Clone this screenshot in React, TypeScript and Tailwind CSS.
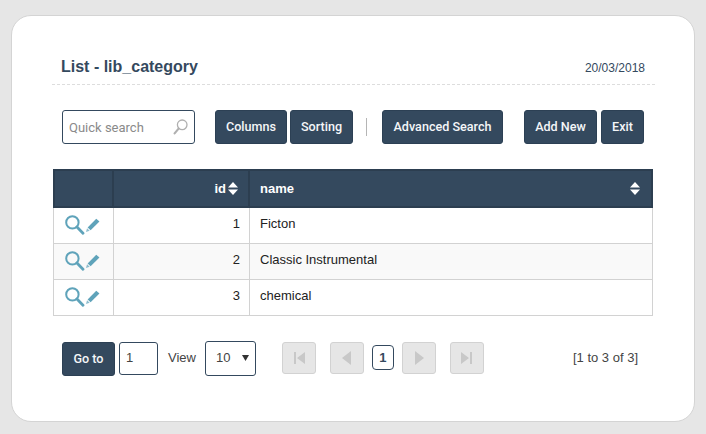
const rows = [
  { id: 1, name: "Ficton" },
  { id: 2, name: "Classic Instrumental" },
  { id: 3, name: "chemical" },
];

const roboto = "font-['Roboto',sans-serif]";
const arial = "font-['Liberation_Sans',sans-serif]";
const btn =
  "flex h-[34px] items-center justify-center rounded-[3px] border border-[#2c4054] bg-[#34495e] pt-px text-[12.6px] font-medium text-[#f4f6f8] font-['Roboto',sans-serif]";

function SortIcon() {
  return (
    <svg width="10" height="13" viewBox="0 0 10 13" fill="white">
      <path d="M5 0 L10 5.5 H0 Z" />
      <path d="M0 7.5 H10 L5 13 Z" />
    </svg>
  );
}

function QuickSearchIcon() {
  return (
    <svg width="15" height="16" viewBox="0 0 15 16" fill="none" stroke="#b0b0b0">
      <circle cx="9.2" cy="5.8" r="4.8" strokeWidth="1.3" />
      <path d="M5.6 9.6 L1.6 14.4" strokeWidth="2.2" strokeLinecap="round" />
    </svg>
  );
}

function ViewIcon() {
  return (
    <svg width="20" height="20" viewBox="0 0 20 20" fill="none" stroke="#5fa3ba">
      <circle cx="7.4" cy="7.4" r="6.2" strokeWidth="2" />
      <path d="M12 12 L18 18.2" strokeWidth="2.8" strokeLinecap="round" />
    </svg>
  );
}

function EditIcon() {
  return (
    <svg width="15" height="15" viewBox="0 0 16 16" fill="#5fa3ba">
      <path d="M12 0.8 L15.4 3.6 L6 13 L2.8 10 Z" />
      <path d="M2.2 11 L5 13.6 L1 15 Z" opacity="0.7" />
    </svg>
  );
}

function PagerButton({ path }: { path: string }) {
  return (
    <div className="flex h-[32px] w-[34px] items-center justify-center rounded-[3px] border border-[#d2d2d2] bg-[#e6e6e6]">
      <svg width="12" height="14" viewBox="0 0 12 14" fill="#c8c8c8">
        <path d={path} />
      </svg>
    </div>
  );
}

export default function App() {
  return (
    <div className="h-[434px] w-[706px] overflow-hidden bg-[#e6e6e6] pl-[11px] pt-[15px]">
      <div className={`h-[407px] w-[684px] rounded-[20px] border border-[#d4d4d4] bg-white pl-[40px] pr-[39px] ${arial}`}>
        {/* Title */}
        <div className="flex h-[69px] items-end justify-between border-b border-dashed border-[#dddddd] pb-[7px] pl-[9px] pr-[10px]">
          <h1 className="text-[16px] font-bold leading-[20px] text-[#34495e]">List - lib_category</h1>
          <span className="text-[12px] leading-[18px] text-[#34495e]">20/03/2018</span>
        </div>

        {/* Toolbar */}
        <div className="mt-[25px] flex items-center pl-[10px]">
          <div className="flex h-[34px] w-[133px] items-center justify-between rounded-[3px] border border-[#34495e] pl-[6px] pr-[6px]">
            <span className={`pt-px text-[13px] text-[#8a8a8a] ${roboto}`}>Quick search</span>
            <QuickSearchIcon />
          </div>
          <div className={`${btn} ml-[20px] w-[72px]`}>Columns</div>
          <div className={`${btn} ml-[3px] w-[63px]`}>Sorting</div>
          <div className="ml-[13px] h-[18px] w-px bg-[#b5b5b5]" />
          <div className={`${btn} ml-[15px] w-[121px]`}>Advanced Search</div>
          <div className={`${btn} ml-[21px] w-[73px]`}>Add New</div>
          <div className={`${btn} ml-[4px] w-[43px]`}>Exit</div>
        </div>

        {/* Table */}
        <div className="ml-px mt-[25px] w-[600px]">
          <div className="flex h-[39px] border-2 border-[#2c3e50] bg-[#34495e] text-[13px] font-bold text-white">
            <div className="w-[59px] border-r-2 border-[#2c3e50]" />
            <div className="flex w-[136px] items-center justify-end gap-[2px] border-r-2 border-[#2c3e50] pr-[10px]">
              id
              <SortIcon />
            </div>
            <div className="flex flex-1 items-center justify-between pl-[10px] pr-[11px]">
              name
              <SortIcon />
            </div>
          </div>
          {rows.map((row, i) => (
            <div
              key={row.id}
              className={`flex h-[36px] border-x border-b border-[#d2d2d2] text-[13px] text-[#222222] ${i === 1 ? "bg-[#f9f9f9]" : "bg-white"}`}
            >
              <div className="flex w-[60px] items-start border-r border-[#d2d2d2] pl-[11px] pt-[7px]">
                <ViewIcon />
                <div className="pt-[3px]">
                  <EditIcon />
                </div>
              </div>
              <div className="w-[136px] border-r border-[#d2d2d2] pr-[9px] pt-[8px] text-right leading-[15px]">{row.id}</div>
              <div className="flex-1 pl-[10px] pt-[8px] leading-[15px]">{row.name}</div>
            </div>
          ))}
        </div>

        {/* Pager */}
        <div className="mt-[25px] flex items-center pl-[10px]">
          <div className={`${btn} w-[53px]`}>Go to</div>
          <div className="ml-[4px] flex h-[33px] w-[39px] items-center rounded-[3px] border border-[#34495e] pb-[2px] pl-[6px] text-[13px] text-[#444444]">1</div>
          <span className="ml-[10px] pb-[2px] text-[13px] text-[#444444]">View</span>
          <div className="ml-[9px] flex h-[35px] w-[51px] items-center justify-between rounded-[3px] border border-[#34495e] pb-[2px] pl-[10px] pr-[6px] text-[13px] text-[#444444]">
            10
            <svg width="7" height="6" viewBox="0 0 7 6" fill="#333333">
              <path d="M0 0 H7 L3.5 6 Z" />
            </svg>
          </div>
          <div className="mb-[2px] ml-[26px]">
            <PagerButton path="M1 1 H3 V13 H1 Z M12 1 V13 L4 7 Z" />
          </div>
          <div className="mb-[2px] ml-[14px]">
            <PagerButton path="M10 0 V14 L1 7 Z" />
          </div>
          <div className="mb-[2px] ml-[8px] flex h-[25px] w-[22px] items-center justify-center rounded-[4px] border border-[#34495e] text-[13px] font-bold text-[#34495e]">1</div>
          <div className="mb-[2px] ml-[8px]">
            <PagerButton path="M2 0 V14 L11 7 Z" />
          </div>
          <div className="mb-[2px] ml-[14px]">
            <PagerButton path="M0 1 V13 L8 7 Z M9 1 H11 V13 H9 Z" />
          </div>
          <span className="ml-[89px] pb-[2px] text-[13px] text-[#444444]">[1 to 3 of 3]</span>
        </div>
      </div>
    </div>
  );
}
